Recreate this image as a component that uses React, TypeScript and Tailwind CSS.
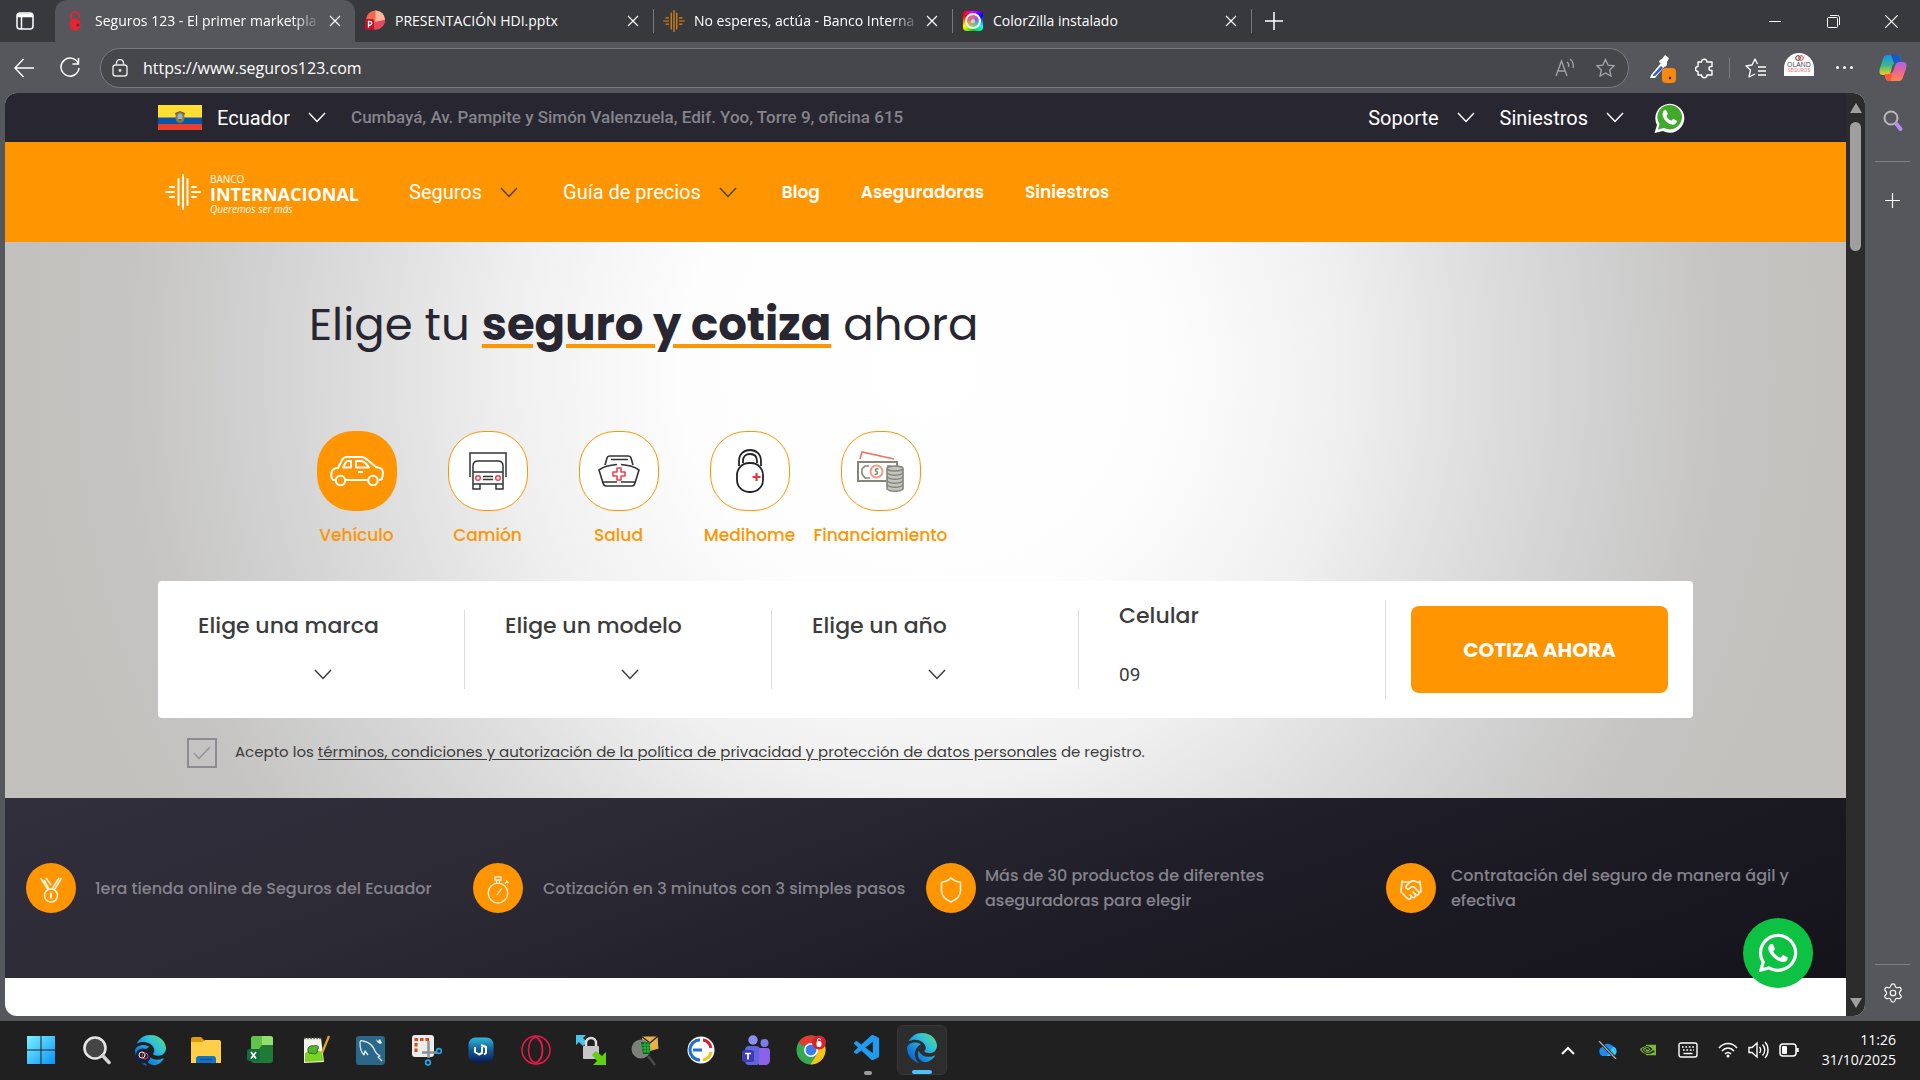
import React from 'react';
import { FaWhatsapp, FaEdge } from 'react-icons/fa6';
import { VscVscode } from 'react-icons/vsc';
import { SiNvidia } from 'react-icons/si';
import { Settings, Handshake } from 'lucide-react';

const poppins = "font-[Poppins,Inter,sans-serif]";
const roboto = "font-[Roboto,sans-serif]";
const segoe = "font-['Segoe_UI','Open_Sans','Noto_Sans',sans-serif]";

function Chevron({ className = '' }: { className?: string }) {
  return (
    <svg width="18" height="11" viewBox="0 0 18 11" fill="none" stroke="currentColor" strokeWidth="1.5" className={className}>
      <path d="M1 1 9 9.5 17 1" />
    </svg>
  );
}

function Cross() {
  return (
    <svg width="12" height="12" viewBox="0 0 12 12" stroke="currentColor" strokeWidth="1.2">
      <path d="M1 1 11 11M11 1 1 11" />
    </svg>
  );
}

/* ---------- Browser tabs ---------- */

const padlock = (
  <svg width="12" height="20" viewBox="0 0 12 20">
    <path d="M2 9V5a4 4 0 0 1 8 0v2" fill="none" stroke="#e32636" strokeWidth="1.800" />
    <ellipse cx="6" cy="13.500" rx="5.500" ry="6.200" fill="#e32636" />
    <path d="M7.500 14h3M9 12.500v3" stroke="#7d1620" strokeWidth="1" />
  </svg>
);

const pptx = (
  <svg width="20" height="24" viewBox="0 0 20 24">
    <circle cx="10.500" cy="11" r="9.500" fill="#f4694c" />
    <path d="M10.500 1.500a9.500 9.500 0 0 1 9.500 9.500l-9.500 2Z" fill="#ffb59a" />
    <path d="M10.500 13 20 11a9.500 9.500 0 0 1-14 8Z" fill="#e2485f" />
    <rect x="0" y="10" width="9" height="11" rx="2" fill="#c0112b" />
    <path d="M3.500 18.500v-6h1.500a1.800 1.800 0 0 1 0 3.600H3.500" fill="none" stroke="#fff" strokeWidth="1.300" />
  </svg>
);

function BankMark({ size, color, weight = 2 }: { size: number; color: string; weight?: number }) {
  return (
    <svg width={size} height={size} viewBox="0 0 36 36" stroke={color} strokeWidth={weight} strokeLinecap="round" className="shrink-0">
      <path d="M18 1v34M13.500 5v26M22.500 5v26M1 18h8M5 13h4M5 23h4M27 13h4M27 18h8M27 23h4" />
    </svg>
  );
}

const colorzilla = (
  <span className="grid h-5 w-5 place-items-center rounded-sm bg-[conic-gradient(#f0f,#00f,#0ff,#0c0,#ff0,#f00,#f0f)]">
    <span className="grid h-4 w-4 place-items-center rounded-full border-2 border-white bg-[conic-gradient(#d6a,#86c,#6ac,#8c6,#ca6,#d66,#d6a)]">
      <span className="h-1 w-1 rounded-full bg-white/60" />
    </span>
  </span>
);

function Tab({ icon, title, active = false, faded = false }: { icon: React.ReactNode; title: string; active?: boolean; faded?: boolean }) {
  return (
    <div className={active ? 'flex h-full w-[300px] items-center rounded-t-xl bg-[#56575c] pr-3 pl-2' : 'flex h-full w-[298px] items-center pr-3 pl-2'}>
      <span className="grid w-6 shrink-0 place-items-center">{icon}</span>
      <span className={faded ? 'ml-2 w-[226px] overflow-hidden text-sm leading-6 whitespace-nowrap [mask-image:linear-gradient(to_right,black_88%,transparent)]' : 'ml-2 text-sm leading-6 whitespace-nowrap'}>{title}</span>
      <button aria-label="Cerrar pestaña" className="ml-auto grid h-6 w-4 shrink-0 place-items-center"><Cross /></button>
    </div>
  );
}

function TabStrip() {
  return (
    <header className={`flex h-[42px] items-center bg-[#38393d] text-white ${segoe}`}>
      <button aria-label="Pestañas" className="grid h-full w-[55px] place-items-center pr-1.5">
        <svg width="18" height="18" viewBox="0 0 18 18" fill="none" stroke="#fff" strokeWidth="1.500">
          <rect x="1" y="1" width="16" height="16" rx="3" />
          <path d="M1 4.500h16M5.500 5v12" />
          <path d="M2 3h14" strokeWidth="3" />
        </svg>
      </button>
      <Tab active faded icon={padlock} title="Seguros 123 - El primer marketpla" />
      <Tab icon={pptx} title="PRESENTACIÓN HDI.pptx" />
      <span className="h-6 w-px bg-[#77787c]" />
      <Tab faded icon={<BankMark size={22} color="#e8870e" />} title="No esperes, actúa - Banco Interna" />
      <span className="h-6 w-px bg-[#77787c]" />
      <Tab icon={colorzilla} title="ColorZilla instalado" />
      <span className="h-6 w-px bg-[#77787c]" />
      <button aria-label="Nueva pestaña" className="ml-2.5 grid h-8 w-6 place-items-center">
        <svg width="18" height="18" viewBox="0 0 18 18" stroke="#fff" strokeWidth="1.500"><path d="M9 0v18M0 9h18" /></svg>
      </button>
      <div className="ml-auto flex h-full">
        <button aria-label="Minimizar" className="grid w-[58px] place-items-center"><span className="h-px w-3 bg-white" /></button>
        <button aria-label="Restaurar" className="grid w-[58px] place-items-center">
          <svg width="13" height="13" viewBox="0 0 13 13" fill="none" stroke="#fff"><rect x=".5" y="2.500" width="10" height="10" rx="1" /><path d="M3 .5h7.500a2 2 0 0 1 2 2V10" /></svg>
        </button>
        <button aria-label="Cerrar" className="grid w-[58px] place-items-center">
          <svg width="13" height="13" viewBox="0 0 13 13" stroke="#fff" strokeWidth="1.200"><path d="m0 0 13 13M13 0 0 13" /></svg>
        </button>
      </div>
    </header>
  );
}

/* ---------- Address bar ---------- */

const starPath = 'M10 1.500l2.600 5.600 6 .7-4.400 4.200 1.200 6.100L10 15l-5.400 3.100 1.200-6.100L1.400 7.800l6-.7Z';

function Toolbar() {
  return (
    <div className={`flex h-[51px] items-center bg-[#56575c] text-white ${segoe}`}>
      <button aria-label="Atrás" className="ml-3 grid w-6 place-items-center">
        <svg width="20" height="20" viewBox="0 0 20 20" fill="none" stroke="#fff" strokeWidth="1.400"><path d="M20 10H1M9.500 1 1 10l8.500 9" /></svg>
      </button>
      <button aria-label="Actualizar" className="ml-[22px] grid w-6 place-items-center">
        <svg width="20" height="21" viewBox="0 0 20 21" fill="none" stroke="#fff" strokeWidth="1.500"><path d="M18.500 7A9 9 0 1 0 19 11M18.500 1v6h-6" /></svg>
      </button>
      <div className="ml-[18px] flex h-10 flex-1 items-center rounded-full border border-[#7b7c81] bg-[#46474b] pr-3 pl-2.5">
        <svg width="18" height="18" viewBox="0 0 18 18" fill="none" stroke="#e6e6e6" strokeWidth="1.400">
          <rect x="2" y="6" width="14" height="11" rx="2.500" /><path d="M5.500 6V4a3.500 3.500 0 0 1 7 0v2" /><circle cx="9" cy="11.500" r=".7" fill="#fff" />
        </svg>
        <input aria-label="Dirección" defaultValue="https://www.seguros123.com" className="ml-3.5 flex-1 bg-transparent text-base text-white outline-none" />
        <svg width="20" height="20" viewBox="0 0 20 20" fill="none" stroke="#a3a4a7" strokeWidth="1.300">
          <path d="m1 18 5.500-15L12 18M3 13h7M12 4c1.500 1 2 3 1.500 5M15 1c3 2 4 6 3 9" />
        </svg>
        <svg className="ml-5" width="21" height="20" viewBox="0 0 20 20" fill="none" stroke="#a3a4a7" strokeWidth="1.300"><path d={starPath} /></svg>
      </div>
      <button aria-label="ColorZilla" className="ml-5 w-7">
        <svg width="28" height="30" viewBox="0 0 28 30">
          <path d="m2 22 10-12 4 3L6 25H1Z" fill="#fff" /><path d="m4 22 8-9 2 2-8 8H4Z" fill="#2f55d4" />
          <path d="m11 7 2-1 3-4 4 3-2 4v3l-2 2-6-5Z" fill="#fff" />
          <rect x="13" y="15" width="14" height="15" rx="4" fill="#f8890f" /><circle cx="21" cy="25" r="1.200" fill="#222" />
        </svg>
      </button>
      <button aria-label="Extensiones" className="ml-[18px]">
        <svg width="19" height="22" viewBox="0 0 19 22" fill="none" stroke="#fff" strokeWidth="1.400" strokeLinejoin="round">
          <path d="M3 5h3.500a2.700 2.700 0 0 1 5.400 0H17v4.500h-1a2 2 0 0 0 0 4h1V18h-5a2.700 2.700 0 0 1-5.400 0H3v-3.500a2.500 2.500 0 0 1 0-5Z" />
        </svg>
      </button>
      <span className="mx-[15px] h-5 w-px bg-[#7b7c81]" />
      <button aria-label="Favoritos">
        <svg width="21" height="20" viewBox="0 0 21 20" fill="none" stroke="#fff" strokeWidth="1.300">
          <path d="M12.500 6 10 1 7 7l-6 1 4.500 4L4 19l6-3M13 9h8M13 13h8M13 17h8" strokeLinejoin="round" />
        </svg>
      </button>
      <button aria-label="Perfil" className="mt-[11px] ml-[18px] flex h-[23px] w-[30px] flex-col items-center self-start overflow-hidden rounded-t-full bg-white">
        <svg className="mt-0.5" width="9" height="6" viewBox="0 0 9 6" fill="none" strokeWidth="1"><circle cx="3" cy="3" r="2.300" stroke="#334" /><circle cx="6" cy="3" r="2.300" stroke="#d33" /></svg>
        <span className="text-[7px] leading-[7px] text-[#345]">OLAND</span>
        <span className="text-[5px] leading-[5px] text-[#d66]">SEGUROS</span>
      </button>
      <button aria-label="Más" className="mx-[22px] flex gap-1">
        <i className="h-[3px] w-[3px] rounded-full bg-white" /><i className="h-[3px] w-[3px] rounded-full bg-white" /><i className="h-[3px] w-[3px] rounded-full bg-white" />
      </button>
      <button aria-label="Copilot" className="mr-[13px] ml-1">
        <svg width="28" height="28" viewBox="0 0 28 28">
          <defs>
            <linearGradient id="cpa" x1="0" y1="0" x2="0" y2="1"><stop stopColor="#1b8ff0" /><stop offset=".5" stopColor="#34b98a" /><stop offset="1" stopColor="#f5cf1d" /></linearGradient>
            <linearGradient id="cpb" x1="0" y1="0" x2="0" y2="1"><stop stopColor="#a765ee" /><stop offset=".5" stopColor="#ee6490" /><stop offset="1" stopColor="#f9884c" /></linearGradient>
          </defs>
          <path d="M8 1h10c2 0 3 1 3.500 3L22 8h-4c-3 0-4 2-5 5l-1 4c-1 3-2 4-4 4H4c-4 0-4-3-3-7l3-9c1-3 2-4 4-4Z" fill="url(#cpa)" />
          <path d="M20 27H10c-2 0-3-1-3.500-3L6 20h4c3 0 4-2 5-5l1-3c1-3 2-4 4-4h4c4 0 4 3 3 7l-3 8c-1 3-2 4-4 4Z" fill="url(#cpb)" />
          <path d="M12 1h6c2 0 3 1 3.500 3L22 8h-4l-3 1Z" fill="#1657c9" />
          <path d="m6 20 4 0 3-2-1 9h-2c-2 0-3-1-3.500-3Z" fill="#fb5b3b" />
        </svg>
      </button>
    </div>
  );
}

/* ---------- Site header ---------- */

function Flag() {
  return (
    <svg width="44" height="25" viewBox="0 0 44 25">
      <path d="M0 0h44v13H0Z" fill="#ffdd33" /><path d="M0 12.500h44V19H0Z" fill="#0c52a5" /><path d="M0 19h44v6H0Z" fill="#ea4030" />
      <path d="M17 8 22 6l5 2-1 3h-8Z" fill="#6b5634" /><ellipse cx="22" cy="12.500" rx="4.500" ry="5.500" fill="#8b7a45" /><ellipse cx="22" cy="12" rx="2.500" ry="3.500" fill="#8fb7cc" /><path d="M20 14h4l-2 3Z" fill="#55703a" />
    </svg>
  );
}

function TopBar() {
  return (
    <div className={`flex h-[49px] items-center bg-[#282631] px-[153px] text-xl text-white ${roboto}`}>
      <button className="flex items-center">
        <Flag /><span className="ml-[15px]">Ecuador</span><Chevron className="ml-[18px]" />
      </button>
      <address className="ml-[25px] text-[17px] font-medium text-[#85848b] not-italic">Cumbayá, Av. Pampite y Simón Valenzuela, Edif. Yoo, Torre 9, oficina 615</address>
      <button className="ml-auto flex items-center">Soporte<Chevron className="ml-[18px]" /></button>
      <button className="ml-[25px] flex items-center">Siniestros<Chevron className="ml-[18px]" /></button>
      <a href="#whatsapp" aria-label="WhatsApp" className="mr-2 ml-[29px]">
        <svg width="32" height="32" viewBox="0 0 32 32">
          <path d="M1.500 31 4 23A14.500 14.500 0 1 1 10 29Z" fill="#fff" />
          <path d="M5 27.500 6.500 22A12.300 12.300 0 1 1 11 26Z" fill="#43a92c" />
          <path d="M11 8.500c1-.8 2-.6 2.400.2l1.300 2.800c.3.8-.8 1.700-1.300 2.400 1 2.300 2.600 3.800 5 4.800.7-.6 1.400-1.900 2.200-1.600l2.700 1.400c.9.500.6 2.100-.4 3-2 1.800-4.700 1.500-7.900-.5-3-2-5.200-5-5.400-8.200 0-1.800.5-3.500 1.400-4.300Z" fill="#fff" />
        </svg>
      </a>
    </div>
  );
}

function NavBar() {
  return (
    <nav className={`flex h-[100px] items-center bg-[#ff9500] pr-[153px] pl-[160px] text-xl text-white ${roboto}`}>
      <a href="#inicio" className="flex w-[200px] items-center">
        <BankMark size={36} color="#fff" weight={2} />
        <span className="ml-[9px] flex flex-col pt-1 font-['Open_Sans',sans-serif]">
          <span className="text-[10px] leading-3 font-medium">BANCO</span>
          <span className="text-lg leading-[18px] font-bold">INTERNACIONAL</span>
          <span className="text-[10px] leading-3 font-medium italic">Queremos ser más</span>
        </span>
      </a>
      <button className="ml-11 flex items-center">Seguros<Chevron className="ml-[18px] text-[#4a4439]" /></button>
      <button className="ml-[45px] flex items-center">Guía de precios<Chevron className="ml-[18px] text-[#4a4439]" /></button>
      <div className={`ml-[45px] flex items-center gap-[41px] pt-0.5 text-[17px] font-semibold ${poppins}`}>
        <a href="#blog">Blog</a><a href="#aseguradoras">Aseguradoras</a><a href="#siniestros">Siniestros</a>
      </div>
    </nav>
  );
}

/* ---------- Hero ---------- */

const car = (
  <svg width="54" height="30" viewBox="0 0 54 30" fill="none" stroke="#fff" strokeWidth="2" strokeLinejoin="round">
    <path d="M6 24H3c-2-2-2-6-1-9 1-2 3-3 6-3l4-8c1-2 2-3 5-3h14c4 0 6 2 9 5l6 5c5 1 7 2 7 6l-1 6-3 1M15 24h23" />
    <circle cx="10.500" cy="24.500" r="4.700" /><circle cx="43" cy="24.500" r="4.700" />
    <path d="M13 11.500 16 6c.5-1 1-1 2-1h3v6.500ZM26 5h5c3 0 5 2 8 6.500H26ZM28 16h5" />
  </svg>
);

const truck = (
  <svg width="38" height="38" viewBox="0 0 38 38" fill="none" stroke="#333" strokeWidth="1.500">
    <path d="M1 25V1h36v24" /><path d="M4 32V14c0-3 2-5 5-5h20c3 0 5 2 5 5v18ZM4 20h30M4 32v5h7v-5M27 32v5h7v-5" />
    <circle cx="9" cy="26" r="2.300" stroke="#f0414f" /><circle cx="29" cy="26" r="2.300" stroke="#f0414f" /><path d="M14 24.500h10M14 27.500h10" />
  </svg>
);

const nurse = (
  <svg width="42" height="32" viewBox="0 0 42 32" fill="none" stroke="#333" strokeWidth="1.600" strokeLinejoin="round">
    <path d="M7 10 9 3c.4-1.500 1-2 3-2h18c2 0 2.600.5 3 2l2 7M13 4.500h17" /><path d="M19 9.500C12 10 5 12 1 15l4 13c.6 2 1 3 3 3h26c2 0 2.400-1 3-3l4-13c-4-3-11-5-18-5.500M5 27h14M23 27h14" />
    <path d="M19 13h4v4h4v4h-4v4h-4v-4h-4v-4h4Z" stroke="#f0414f" />
  </svg>
);

const medihome = (
  <svg width="30" height="44" viewBox="0 0 30 44" fill="none" stroke="#252329" strokeWidth="1.800">
    <rect x="2" y="14" width="26" height="29" rx="12" /><path d="M4 17v-5C4 5 9 1 15 1s11 4 11 11v5M8 14v-2c0-5 3-7 7-7s7 2 7 7v2" />
    <path d="M21.500 24v8M17.500 28h8" stroke="#f0303f" strokeWidth="2.200" />
  </svg>
);

const money = (
  <svg width="48" height="42" viewBox="0 0 48 42" fill="none" stroke="#85867b" strokeWidth="1.600">
    <path d="M3 9 5 2l32 7" stroke="#f3705a" />
    <path d="M30 31H1V12h39v4" strokeWidth="2" /><path d="M12 16H8l-3 3v5l3 4h5M30 16h4" />
    <circle cx="19.500" cy="21.500" r="6" stroke="#f29c86" strokeWidth="2" /><path d="M21.500 19c-3-1-4 2-2 2.500s1 3.500-2 2.500" />
    <path d="M30 19v20c3 3 13 3 16 0V19" fill="#c3c4bb" /><ellipse cx="38" cy="18.500" rx="8" ry="2.500" fill="#c3c4bb" />
    <path d="M30 23c3 3 13 3 16 0M30 27c3 3 13 3 16 0M30 31c3 3 13 3 16 0M30 35c3 3 13 3 16 0" />
  </svg>
);

const products = [
  { label: 'Vehículo', icon: car, active: true },
  { label: 'Camión', icon: truck },
  { label: 'Salud', icon: nurse },
  { label: 'Medihome', icon: medihome },
  { label: 'Financiamiento', icon: money },
];

function SelectCell({ id, label }: { id: string; label: string }) {
  return (
    <div className="my-[29px] flex flex-col border-r border-[#dcdcdc] pr-4 pl-10">
      <label htmlFor={id} className="text-[22px] leading-8 font-medium">{label}</label>
      <div className="mt-[18px] grid h-7 place-items-center">
        <select id={id} className="col-start-1 row-start-1 h-full w-full appearance-none bg-transparent outline-none"><option value=""></option></select>
        <Chevron className="pointer-events-none col-start-1 row-start-1" />
      </div>
    </div>
  );
}

function Hero() {
  return (
    <main className={`bg-[radial-gradient(circle_900px_at_50%_23%,#ffffff_0%,#fdfdfd_27%,#f0f0f0_46%,#dedede_62%,#d0d0d0_76%,#c5c4c2_89%,#c3c1be_100%)] px-[153px] pt-[53px] pb-[31px] text-[#3c3c3c] ${poppins}`}>
      <h1 className="pl-[151px] text-[45px] leading-[60px] font-normal text-[#282631]">
        Elige tu <strong className="font-bold underline decoration-[#ff9500] decoration-4 underline-offset-4">seguro y cotiza</strong> ahora
      </h1>
      <div className="mt-[76px] flex pl-[133px]">
        {products.map((p) => (
          <button key={p.label} className="flex w-[131px] flex-col items-center">
            <span className={p.active ? 'grid h-20 w-20 place-items-center rounded-[36px] bg-[#ff9500]' : 'grid h-20 w-20 place-items-center rounded-[36px] border border-[#ff9500] bg-white'}>{p.icon}</span>
            <span className="mt-3 text-[17px] leading-6 font-medium whitespace-nowrap text-[#ff9500]">{p.label}</span>
          </button>
        ))}
      </div>
      <form className="mt-[34px] grid grid-cols-5 rounded bg-white">
        <SelectCell id="marca" label="Elige una marca" />
        <SelectCell id="modelo" label="Elige un modelo" />
        <SelectCell id="anio" label="Elige un año" />
        <div className="my-[19px] flex flex-col border-r border-[#dcdcdc] pr-4 pl-10">
          <label htmlFor="celular" className="text-[22px] leading-8 font-medium">Celular</label>
          <input id="celular" defaultValue="09" className={`mt-[26px] h-8 w-full bg-transparent text-[19px] outline-none ${roboto}`} />
        </div>
        <button type="button" className="mx-[25px] my-[25px] h-[87px] rounded-lg bg-[#ff9500] text-xl font-bold text-white">COTIZA AHORA</button>
      </form>
      <div className="mt-5 flex h-[29px] items-center pl-[29px]">
        <span className="grid place-items-center">
          <input id="acepto" type="checkbox" defaultChecked className="col-start-1 row-start-1 h-[30px] w-[30px] appearance-none border-2 border-[#8d8c93]" />
          <svg className="pointer-events-none col-start-1 row-start-1" width="18" height="14" viewBox="0 0 18 14" fill="none" stroke="#9a99a0" strokeWidth="1.800"><path d="m1 7 5 5.500L17 1" /></svg>
        </span>
        <label htmlFor="acepto" className="ml-[18px] text-[15px]">
          Acepto los <a href="#terminos" className="underline underline-offset-2">términos, condiciones y autorización de la política de privacidad y protección de datos personales</a> de registro.
        </label>
      </div>
    </main>
  );
}

/* ---------- Features ---------- */

function Badge({ children }: { children: React.ReactNode }) {
  return <span className="grid h-[50px] w-[50px] shrink-0 place-items-center rounded-full bg-[#ff9500] text-[#fff1dc]">{children}</span>;
}

const medal = (
  <svg className="mt-1" width="24" height="26" viewBox="0 0 24 26" fill="none" stroke="currentColor" strokeWidth="1.600" strokeLinejoin="round">
    <circle cx="12" cy="18.500" r="6.500" /><path d="M12 15.500v6" strokeWidth="2.200" /><path d="M9 12.500 1.500 1M13 12 20 1M12 8 7 1M15.500 12.500 22.500 1M10 12 5 3" />
  </svg>
);

const stopwatch = (
  <svg className="mt-1" width="24" height="28" viewBox="0 0 24 28" fill="none" stroke="currentColor" strokeWidth="1.300">
    <circle cx="12" cy="17" r="9.800" /><path d="M9 1h6v3H9ZM10.500 4v3M13.500 4v3M19 7.500l2-2M11 19l4.500-6.500M20 4.500l2.500 2.500" />
  </svg>
);

function Features() {
  return (
    <section className={`grid h-[180px] grid-cols-[447fr_453fr_460fr_460fr] items-center bg-[linear-gradient(160deg,#312f3b_0%,#2c2a35_30%,#1e1d27_62%,#15131a_100%)] pl-[21px] text-base leading-[25px] font-medium text-[#85838c] ${poppins}`}>
      <div className="flex items-center gap-[19px]">
        <Badge>{medal}</Badge><p>1era tienda online de Seguros del Ecuador</p>
      </div>
      <div className="flex items-center gap-5">
        <Badge>{stopwatch}</Badge><p className="whitespace-nowrap">Cotización en 3 minutos con 3 simples pasos</p>
      </div>
      <div className="flex items-center gap-[9px]">
        <Badge>
          <svg className="mt-1" width="22" height="26" viewBox="0 0 22 26" fill="none" stroke="currentColor" strokeWidth="1.600"><path d="M11 1c3 3 6 4 9.500 4.500V14c0 5-4 8.500-9.500 11C5.500 22.500 1.500 19 1.500 14V5.500C5 5 8 4 11 1Z" /></svg>
        </Badge>
        <p className="max-w-[320px]">Más de 30 productos de diferentes aseguradoras para elegir</p>
      </div>
      <div className="flex items-center gap-[15px]">
        <Badge><Handshake className="mt-1" size={24} strokeWidth={1.700} /></Badge><p className="max-w-[360px]">Contratación del seguro de manera ágil y efectiva</p>
      </div>
    </section>
  );
}

/* ---------- Taskbar ---------- */

const appIcons: { name: string; icon: React.ReactNode }[] = [
  { name: 'Inicio', icon: (
    <svg width="30" height="30" viewBox="0 0 30 30"><defs><linearGradient id="win" x1="0" y1="0" x2="1" y2="1"><stop stopColor="#7df3ff" /><stop offset="1" stopColor="#0a93fb" /></linearGradient></defs><path d="M1 1h13.500v13.500H1ZM15.500 1H29v13.500H15.500ZM1 15.500h13.500V29H1ZM15.500 15.500H29V29H15.500Z" fill="url(#win)" /></svg>) },
  { name: 'Buscar', icon: (
    <svg width="30" height="30" viewBox="0 0 30 30"><circle cx="14" cy="13" r="10.500" fill="#454545" stroke="#e4e4e4" strokeWidth="2.600" /><path d="m21.500 20.500 6.500 7" stroke="#d4d4d4" strokeWidth="3.500" strokeLinecap="round" /></svg>) },
  { name: 'Edge Oland', icon: (
    <svg width="31" height="31" viewBox="0 0 31 31"><FaEdge size={31} fill="url(#edge)" /><circle cx="8" cy="21" r="7.500" fill="#15203c" /><circle cx="7" cy="20" r="3" fill="none" stroke="#fff" /><circle cx="10" cy="21" r="3" fill="none" stroke="#e04050" /></svg>) },
  { name: 'Explorador', icon: (
    <svg width="30" height="30" viewBox="0 0 30 30"><path d="M0 4a2 2 0 0 1 2-2h8l3 3v5H0Z" fill="#e09a08" /><path d="M0 7h11l3-2h14a2 2 0 0 1 2 2v21H0Z" fill="#ffcf48" /><path d="M5 28v-4c0-2 1-3 3-3h14c2 0 3 1 3 3v4Z" fill="#1273c8" /><path d="M9 24.500h12" stroke="#0b4d93" strokeWidth="1.200" /></svg>) },
  { name: 'Excel', icon: (
    <svg width="30" height="30" viewBox="0 0 30 30"><rect x="5" y="1" width="22" height="27" rx="3" fill="#1f7a35" /><path d="M8 1h16a3 3 0 0 1 3 3v6H16l-3 4H5V4a3 3 0 0 1 3-3Z" fill="#63c24a" /><path d="M16 1h8a3 3 0 0 1 3 3v6H16Z" fill="#8fe071" /><rect x="1" y="14" width="13" height="12" rx="2.500" fill="#156b3c" /><path d="m5 17 5 6.500M10 17l-5 6.500" stroke="#fff" strokeWidth="1.800" /></svg>) },
  { name: 'Notepad++', icon: (
    <svg width="30" height="30" viewBox="0 0 30 30"><path d="M3 3h17l3 24-20 1Z" fill="#f4f6ee" /><path d="M4 18c6-4 13-3 17-1l1.500 9L4 27Z" fill="#7cd322" /><path d="M3 3.500h17" stroke="#777" strokeWidth="1.500" strokeDasharray="2 1" /><path d="M7 16c-1-4 3-6 6-5 4-2 6 2 3 4 2 3-3 5-5 3-2 1-4 0-4-2Z" fill="#4fb52b" stroke="#1d4d14" strokeWidth=".8" /><path d="m28 1-7 17" stroke="#e7a51b" strokeWidth="2.200" /></svg>) },
  { name: 'MySQL Workbench', icon: (
    <svg width="29" height="29" viewBox="0 0 29 29"><rect width="29" height="29" rx="3" fill="#2b6789" /><path d="M8 19C5 16 4 10 4 7c0-2 1-3 3-2 6 1 10 5 12 10 1 3 3 4 5 5l-2 1 4 4M8 19l1-4 3 4" fill="none" stroke="#dde8ef" strokeWidth="1.300" strokeLinejoin="round" /><path d="m20 3 2 2 2-2 2 4-2 1-3-2Z" fill="#e8eef2" /></svg>) },
  { name: 'Recortes', icon: (
    <svg width="32" height="32" viewBox="0 0 32 32"><rect x="2" y="1" width="22" height="22" rx="3" fill="#ececec" /><path d="M6 18V5.500h13" fill="none" stroke="#d9480f" strokeWidth="3" strokeDasharray="3.500 2" /><path d="M18.500 7v17M12 18.500h15" stroke="#8b8f96" strokeWidth="2.500" /><circle cx="29" cy="17" r="2.400" fill="none" stroke="#1ea7e8" strokeWidth="1.600" /><circle cx="18" cy="28.500" r="2.400" fill="none" stroke="#1ea7e8" strokeWidth="1.600" /></svg>) },
  { name: 'UltraViewer', icon: (
    <svg width="26" height="26" viewBox="0 0 26 26"><defs><linearGradient id="ub" x1="0" y1="0" x2="0" y2="1"><stop stopColor="#31b7d8" /><stop offset=".5" stopColor="#155a97" /><stop offset="1" stopColor="#0a1c52" /></linearGradient></defs><rect x=".5" y=".5" width="25" height="25" rx="7" fill="url(#ub)" /><path d="M7 10v5l4 2.500 3-1.500V10M13 8l5 2v6l-2 1.500" fill="none" stroke="#fff" strokeWidth="2" strokeLinejoin="round" /></svg>) },
  { name: 'Opera', icon: (
    <svg width="30" height="30" viewBox="0 0 30 30" fill="none" stroke="#e8194b" strokeWidth="1.500"><circle cx="15" cy="15" r="14" /><ellipse cx="14.500" cy="15" rx="7" ry="12.500" /><path d="M17 4c5 3 7 17 0 22" /></svg>) },
  { name: 'WinSCP', icon: (
    <svg width="32" height="32" viewBox="0 0 32 32"><path d="M1 1h10l-3 3 4 4-4 4-4-4-3 3Z" fill="#4ac3ea" /><path d="M11 13V9a5 5 0 0 1 10 0v4" fill="none" stroke="#dcdcdc" strokeWidth="2.500" /><rect x="8" y="12" width="16" height="13" rx="1" fill="#c6c6cb" /><path d="m17 21 4-4 6 5 4-4v13H18l4-4Z" fill="#63cf12" /></svg>) },
  { name: 'Papercut', icon: (
    <svg width="32" height="32" viewBox="0 0 32 32"><path d="M11 2h17l1 13-14 4Z" fill="#e8b04b" stroke="#222" /><path d="m11 2 9 7 8-7" fill="none" stroke="#222" strokeWidth="1.300" /><circle cx="11" cy="15" r="9.500" fill="#7d8078" /><path d="M11 8h9v12h-7Z" fill="#0c6a1e" /><path d="M12 11h8M12 14h8M13 17h7M15 8v11M18 8v11" stroke="#2ee04a" strokeWidth=".7" /><path d="m18 22 7 9" stroke="#4b4b4b" strokeWidth="2.500" /></svg>) },
  { name: 'EC', icon: (
    <svg width="28" height="28" viewBox="0 0 28 28"><circle cx="14" cy="14" r="13.500" fill="#fff" /><g fill="none" strokeWidth="3"><path d="M13 4a10 10 0 0 0 0 20" stroke="#1a6fd8" /><path d="M16 4a10 10 0 0 1 8 8" stroke="#d02030" /><path d="M24 16a10 10 0 0 1-8 8" stroke="#f8c410" /><path d="M6 14h9" stroke="#1a6fd8" /></g></svg>) },
  { name: 'Teams', icon: (
    <svg width="30" height="31" viewBox="0 0 30 31"><circle cx="12" cy="5" r="4.700" fill="#8d90f2" /><circle cx="23.500" cy="8" r="4" fill="#7a7cf0" /><rect x="4" y="11" width="15" height="19" rx="4" fill="#6264e0" /><path d="M18 13h8a3 3 0 0 1 3 3v9c0 3-2 5-5 5h-6Z" fill="#8b61e8" /><rect x="1" y="15" width="12" height="12" rx="2.500" fill="#3f3cae" /><path d="M4 18.500h6M7 18.500v6" stroke="#fff" strokeWidth="1.700" /></svg>) },
  { name: 'Chrome', icon: (
    <svg width="30" height="30" viewBox="0 0 30 30"><circle cx="15" cy="15" r="14.500" fill="#34a853" /><path d="M15 15 2.500 7.500A14.500 14.500 0 0 1 28 8.500Z" fill="#e33b2e" /><path d="M15 8.500h13A14.500 14.500 0 0 1 14.500 29.500l7-11Z" fill="#fbc116" /><circle cx="15" cy="15" r="7" fill="#fff" /><circle cx="15" cy="15" r="5.400" fill="#3b7ded" /><circle cx="23" cy="7.500" r="7" fill="#d8232f" /><rect x="20.500" y="6" width="5" height="6" rx="2" fill="#fff" /><path d="M21.500 6.500V5a1.500 1.500 0 0 1 3 0" fill="none" stroke="#fff" /></svg>) },
];

const tray = 'grid h-8 w-10 place-items-center';

function Taskbar() {
  return (
    <footer className={`flex h-[59px] items-center bg-[#202020] pr-6 pb-px pl-[13px] text-white ${segoe}`}>
      <svg width="0" height="0"><defs><linearGradient id="edge" x1="1" y1="0" x2="0" y2="1"><stop stopColor="#5fe06a" /><stop offset=".35" stopColor="#2fc0dc" /><stop offset=".7" stopColor="#1380dc" /><stop offset="1" stopColor="#0f4fa5" /></linearGradient></defs></svg>
      {appIcons.map((a) => (
        <button key={a.name} aria-label={a.name} className="grid w-[55px] place-items-center">{a.icon}</button>
      ))}
      <button aria-label="Visual Studio Code" className="ml-0.5 grid h-[50px] w-[55px] grid-rows-[1fr_4px] place-items-center">
        <VscVscode size={31} color="#1f9cf0" /><span className="h-1 w-2 rounded-full bg-[#9b9b9b]" />
      </button>
      <button aria-label="Microsoft Edge" className="ml-0.5 grid h-[50px] w-[50px] grid-rows-[1fr_4px] place-items-center rounded-md border border-[#383838] bg-[#2d2d2d]">
        <FaEdge size={30} fill="url(#edge)" /><span className="h-1 w-5 rounded-full bg-[#4cc2ff]" />
      </button>
      <div className="ml-auto flex items-center">
        <button aria-label="Mostrar iconos ocultos" className={tray}><svg width="14" height="9" viewBox="0 0 14 9" fill="none" stroke="#fff" strokeWidth="2"><path d="m1 8 6-6 6 6" /></svg></button>
        <button aria-label="OneDrive" className={tray}>
          <svg width="21" height="18" viewBox="0 0 21 18"><path d="M5 15a5 5 0 0 1 0-9 6.500 6.500 0 0 1 11-.5A5 5 0 0 1 16 15Z" fill="#1c8cf0" /><path d="M10 15 16 5.500A5 5 0 0 1 16 15Z" fill="#38c4f8" /><path d="m2 0 17 18" stroke="#202020" strokeWidth="3" /><path d="m2 0 17 18" stroke="#aaa" strokeWidth="1.300" /></svg>
        </button>
        <button aria-label="NVIDIA" className={tray}><SiNvidia size={16} color="#76b83a" /></button>
        <button aria-label="Teclado" className={tray}>
          <svg width="20" height="16" viewBox="0 0 20 16" fill="none" stroke="#fff" strokeWidth="1.400"><rect x="1" y="1" width="18" height="14" rx="2" /><path d="M4 5h12M5 8h11" strokeDasharray="1.700 1.700" /><path d="M5.500 11.500h9" /></svg>
        </button>
        <button aria-label="Red, volumen y batería" className="ml-2.5 flex h-8 items-center gap-2.5">
          <svg width="20" height="16" viewBox="0 0 20 16" fill="none" stroke="#fff" strokeWidth="1.600"><path d="M1 6c5-6 13-6 18 0M4 9c3.500-4 8.500-4 12 0M7 12c2-2 4-2 6 0" /><circle cx="10" cy="14" r="1.500" fill="#fff" stroke="none" /></svg>
          <svg width="21" height="18" viewBox="0 0 21 18" fill="none" stroke="#fff" strokeWidth="1.400"><path d="M1 6.500h3L9 2v14l-5-4.500H1ZM11.500 6c1.500 1.500 1.500 4.500 0 6M14.500 3.500c3 3 3 8 0 11M17 1c4 4 4 12 0 16" /></svg>
          <svg width="20" height="14" viewBox="0 0 20 14" fill="none" stroke="#fff" strokeWidth="1.500"><rect x="1" y="1" width="16" height="12" rx="3" /><rect x="3" y="3" width="5" height="8" rx="1" fill="#fff" stroke="none" /><path d="M18.500 5v4" strokeWidth="2.500" /></svg>
        </button>
        <time className="ml-[23px] text-right text-sm leading-5 whitespace-pre-line">{'11:26\n31/10/2025'}</time>
      </div>
    </footer>
  );
}

/* ---------- Shell ---------- */

function ScrollBar() {
  return (
    <div className="flex w-[19px] flex-col items-center bg-[#2c2c2c] pt-2.5 pb-2">
      <svg width="12" height="10" viewBox="0 0 12 10"><path d="M6 0 12 10H0Z" fill="#9f9f9f" /></svg>
      <span className="mt-[9px] h-[129px] w-[11px] rounded-full bg-[#9f9f9f]" />
      <svg className="mt-auto" width="12" height="10" viewBox="0 0 12 10"><path d="M0 0h12L6 10Z" fill="#9f9f9f" /></svg>
    </div>
  );
}

function SideBar() {
  return (
    <aside className="flex w-[55px] flex-col items-center">
      <button aria-label="Buscar" className="mt-4">
        <svg width="22" height="24" viewBox="0 0 22 24"><circle cx="9" cy="9" r="6.500" fill="none" stroke="#b9b9bc" strokeWidth="2" /><path d="m14.500 15 4 5" stroke="#b98cf5" strokeWidth="4" strokeLinecap="round" /></svg>
      </button>
      <span className="mt-7 h-px w-[35px] bg-[#7f8085]" />
      <button aria-label="Agregar" className="mt-[31px]"><svg width="15" height="15" viewBox="0 0 15 15" stroke="#fff" strokeWidth="1.200"><path d="M7.500 0v15M0 7.500h15" /></svg></button>
      <span className="mt-auto h-px w-[35px] bg-[#7f8085]" />
      <button aria-label="Configuración" className="mt-[17px] mb-3"><Settings size={22} strokeWidth={1.300} color="#fff" /></button>
    </aside>
  );
}

export default function App() {
  return (
    <div className="flex min-h-screen flex-col bg-[#56575c]">
      <TabStrip />
      <Toolbar />
      <div className="flex flex-1 pb-[5px] pl-[5px]">
        <div className="flex flex-1 overflow-hidden rounded-xl bg-white">
          <div className="relative flex-1">
            <TopBar />
            <NavBar />
            <Hero />
            <Features />
            <a href="#chat" aria-label="Chat de WhatsApp" className="absolute right-[33px] bottom-7 grid h-[70px] w-[70px] place-items-center rounded-full bg-[#0dc143] text-white"><FaWhatsapp size={44} /></a>
          </div>
          <ScrollBar />
        </div>
        <SideBar />
      </div>
      <Taskbar />
    </div>
  );
}
